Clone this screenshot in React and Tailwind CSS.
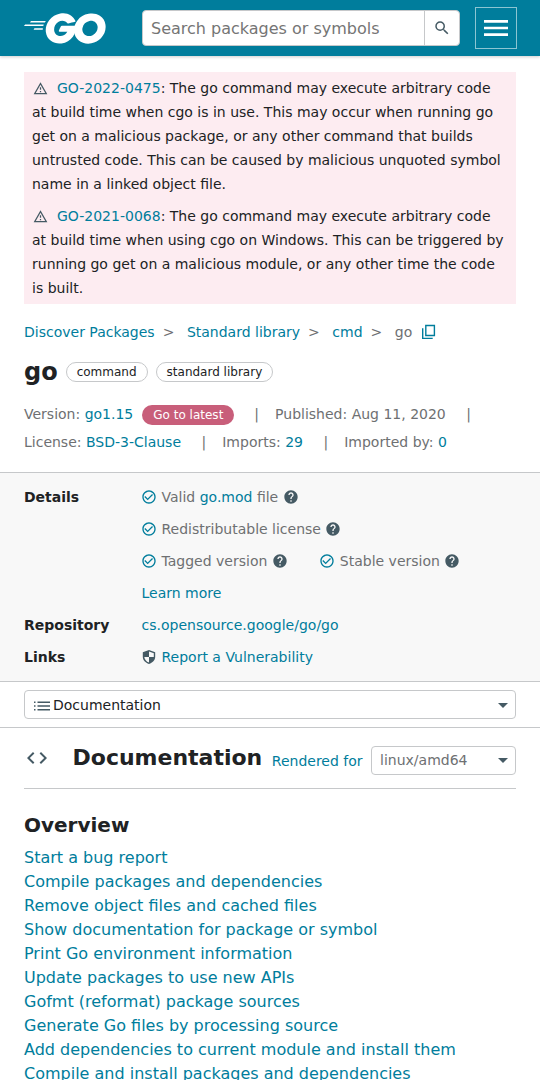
import React from "react";
import {
  MdSearch,
  MdMenu,
  MdOutlineWarningAmber,
  MdCheckCircleOutline,
  MdHelp,
  MdCode,
  MdArrowDropDown,
} from "react-icons/md";

const alerts = [
  {
    id: "GO-2022-0475",
    lines: [
      ": The go command may execute arbitrary code",
      "at build time when cgo is in use. This may occur when running go",
      "get on a malicious package, or any other command that builds",
      "untrusted code. This can be caused by malicious unquoted symbol",
      "name in a linked object file.",
    ],
  },
  {
    id: "GO-2021-0068",
    lines: [
      ": The go command may execute arbitrary code",
      "at build time when using cgo on Windows. This can be triggered by",
      "running go get on a malicious module, or any other time the code",
      "is built.",
    ],
  },
];

const overview = [
  "Start a bug report",
  "Compile packages and dependencies",
  "Remove object files and cached files",
  "Show documentation for package or symbol",
  "Print Go environment information",
  "Update packages to use new APIs",
  "Gofmt (reformat) package sources",
  "Generate Go files by processing source",
  "Add dependencies to current module and install them",
  "Compile and install packages and dependencies",
];

function Link({ children, className = "" }) {
  return (
    <a href="#" className={`text-[#007d9c] ${className}`}>
      {children}
    </a>
  );
}

function GoLogo() {
  return (
    <svg viewBox="24.5 78 206.5 77" className="h-[31px] w-[82px]" fill="#fff" aria-label="Go">
      <path d="M40.2,101.1c-0.4,0-0.5-0.2-0.3-0.5l2.1-2.7c0.2-0.3,0.7-0.5,1.1-0.5l35.7,0c0.4,0,0.5,0.3,0.3,0.6l-1.7,2.6c-0.2,0.3-0.7,0.6-1,0.6L40.2,101.1z" />
      <path d="M25.1,110.3c-0.4,0-0.5-0.2-0.3-0.5l2.1-2.7c0.2-0.3,0.7-0.5,1.1-0.5l45.6,0c0.4,0,0.6,0.3,0.5,0.6l-0.8,2.4c-0.1,0.4-0.5,0.6-0.9,0.6L25.1,110.3z" />
      <path d="M49.3,119.5c-0.4,0-0.5-0.3-0.3-0.6l1.4-2.5c0.2-0.3,0.6-0.6,1-0.6l20,0c0.4,0,0.6,0.3,0.6,0.7l-0.2,2.4c0,0.4-0.4,0.7-0.7,0.7L49.3,119.5z" />
      <path d="M153.1,99.3c-6.3,1.6-10.6,2.8-16.8,4.4c-1.5,0.4-1.6,0.5-2.9-1c-1.5-1.7-2.6-2.8-4.7-3.8c-6.3-3.1-12.4-2.2-18.1,1.5c-6.8,4.4-10.3,10.9-10.2,19c0.1,8,5.6,14.6,13.5,15.7c6.8,0.9,12.5-1.5,17-6.6c0.9-1.1,1.7-2.3,2.7-3.7c-3.6,0-8.1,0-19.3,0c-2.1,0-2.6-1.3-1.9-3c1.3-3.1,3.7-8.3,5.1-10.9c0.3-0.6,1-1.6,2.5-1.6c5.1,0,23.9,0,36.4,0c-0.2,2.7-0.2,5.4-0.6,8.1c-1.1,7.2-3.8,13.8-8.2,19.6c-7.2,9.5-16.6,15.4-28.5,17c-9.8,1.3-18.9-0.6-26.9-6.6c-7.4-5.6-11.6-13-12.7-22.2c-1.3-10.9,1.9-20.7,8.5-29.3c7.1-9.3,16.5-15.2,28-17.3c9.4-1.7,18.4-0.6,26.5,4.9c5.3,3.5,9.1,8.3,11.6,14.1C154.7,98.5,154.3,99,153.1,99.3z" />
      <path d="M186.2,154.6c-9.1-0.2-17.4-2.8-24.4-8.8c-5.9-5.1-9.6-11.6-10.8-19.3c-1.8-11.3,1.3-21.3,8.1-30.2c7.3-9.6,16.1-14.6,28-16.7c10.2-1.8,19.8-0.8,28.5,5.1c7.9,5.4,12.8,12.7,14.1,22.3c1.7,13.5-2.2,24.5-11.5,33.9c-6.6,6.7-14.7,10.9-24,12.8C191.5,154.2,188.8,154.3,186.2,154.6z M210,114.2c-0.1-1.3-0.1-2.3-0.3-3.3c-1.8-9.9-10.9-15.5-20.4-13.3c-9.3,2.1-15.3,8-17.5,17.4c-1.8,7.8,2,15.7,9.2,18.9c5.5,2.4,11,2.1,16.3-0.6C205.2,129.2,209.5,122.8,210,114.2z" />
    </svg>
  );
}

function CopyIcon() {
  return (
    <svg viewBox="0 0 16 16" className="ml-[9px] size-4 text-[#007d9c]" fill="none" stroke="currentColor" strokeWidth="1.4">
      <path d="M4.8 1.500h8.600v10H4.800z" />
      <path d="M1.700 4.200v10.200h10" />
    </svg>
  );
}

function ShieldIcon() {
  return (
    <svg viewBox="0 0 16 16" className="-ml-[0.5px] mr-[4.5px] size-4 text-[#455a64]" fill="currentColor" fillRule="evenodd">
      <path d="M8 .9L14.2 3.2v4.6c0 3.4-2.6 6-6.2 7.3C4.4 13.800 1.8 11.200 1.8 7.800V3.200zM8 2.500V8h4.800V4.200zM8 8H3.300C3.600 10.600 5.300 12.500 8 13.600z" />
    </svg>
  );
}

function ListIcon() {
  return (
    <svg viewBox="0 0 16 10" className="ml-[2px] mr-[3px] mt-[2px] h-[10px] w-4 text-[#455a64]" fill="currentColor">
      <path d="M0 .4h1.500v1.500H0zM0 4.250h1.500v1.500H0zM0 8.100h1.500v1.500H0zM3.500 .4H16v1.500H3.500zM3.500 4.250H16v1.500H3.500zM3.500 8.100H16v1.500H3.500z" />
    </svg>
  );
}

function Check({ children }) {
  return (
    <div className="flex items-center whitespace-pre">
      <MdCheckCircleOutline className="-ml-[0.5px] mr-[4.5px] size-4 text-[#007d9c]" />
      <span>{children}</span>
      <MdHelp className="ml-[4.5px] size-4 text-[#455a64]" />
    </div>
  );
}

function Header() {
  return (
    <header className="flex h-14 items-center bg-[#007d9c] pl-6 shadow-[0_1px_3px_rgba(0,0,0,0.2)]">
      <GoLogo />
      <div className="ml-9 flex h-9 w-[318px] overflow-hidden rounded-[4px] border border-[#c6c8ca] bg-white">
        <div className="flex flex-1 items-center border-r border-[#c6c8ca] pl-2 pt-[2px] text-base text-[#757575]">
          Search packages or symbols
        </div>
        <div className="flex w-[34px] items-center justify-center">
          <MdSearch className="size-[18px] text-[#455a64]" />
        </div>
      </div>
      <div className="ml-[15px] flex h-[42px] w-[42px] items-center justify-center border border-[#8cc5d2]">
        <MdMenu className="size-8 shrink-0 text-white" />
      </div>
    </header>
  );
}

export default function App() {
  return (
    <div className="h-[1080px] w-[540px] overflow-hidden bg-white font-['DejaVu_Sans',sans-serif] text-sm leading-6 text-[#202224]">
      <Header />
      <section className="mx-6 mt-4 flex flex-col gap-2 bg-[#fdecf1] px-2 py-1">
        {alerts.map((a) => (
          <div key={a.id} className="whitespace-nowrap">
            <div className="flex items-center">
              <MdOutlineWarningAmber className="ml-[0.5px] mr-[9.5px] size-[15px] text-[#455a64]" />
              <Link>{a.id}</Link>
              {a.lines[0]}
            </div>
            {a.lines.slice(1).map((l) => (
              <div key={l}>{l}</div>
            ))}
          </div>
        ))}
      </section>

      <nav className="ml-6 mt-4 flex h-6 items-center text-[#6e7072]">
        <Link>Discover Packages</Link>
        <span className="ml-2 mr-[12.5px]">&gt;</span>
        <Link>Standard library</Link>
        <span className="ml-2 mr-[12.5px]">&gt;</span>
        <Link>cmd</Link>
        <span className="ml-2 mr-[12.5px]">&gt;</span>
        <span>go</span>
        <CopyIcon />
      </nav>

      <div className="ml-6 mt-3 flex h-8 items-center">
        <h1 className="text-2xl font-bold leading-8">go</h1>
        <span className="ml-2 h-5 rounded-full border border-[#c6c8ca] px-[10px] text-xs leading-[18px]">command</span>
        <span className="ml-2 h-5 rounded-full border border-[#c6c8ca] px-[10px] text-xs leading-[18px]">standard library</span>
      </div>

      <div className="ml-6 mt-3 text-[#6e7072]">
        <div className="flex h-7 items-center whitespace-pre">
          <span>Version: </span>
          <Link>go1.15</Link>
          <span className="ml-[9px] mt-[2px] h-5 rounded-full bg-[#c85e7a] px-[11px] text-xs leading-5 text-white">Go to latest</span>
          <span className="ml-5">|</span>
          <span className="ml-4">Published: Aug 11, 2020</span>
          <span className="ml-[20.5px]">|</span>
        </div>
        <div className="flex h-7 items-center whitespace-pre">
          <span>License: </span>
          <Link>BSD-3-Clause</Link>
          <span className="ml-[20.5px]">|</span>
          <span className="ml-4">Imports: </span>
          <Link>29</Link>
          <span className="ml-[20.5px]">|</span>
          <span className="ml-4">Imported by: </span>
          <Link>0</Link>
        </div>
      </div>

      <section className="mt-4 grid h-[210px] grid-cols-[117.5px_1fr] content-start border-y border-[#c6c8ca] bg-[#f8f8f8] pl-6 pt-2 leading-8 text-[#6e7072]">
        <h2 className="font-bold text-[#202224]">Details</h2>
        <div>
          <Check>Valid <Link>go.mod</Link> file</Check>
          <Check>Redistributable license</Check>
          <div className="flex gap-8">
            <Check>Tagged version</Check>
            <Check>Stable version</Check>
          </div>
          <Link className="block">Learn more</Link>
        </div>
        <h2 className="font-bold text-[#202224]">Repository</h2>
        <Link>cs.opensource.google/go/go</Link>
        <h2 className="font-bold text-[#202224]">Links</h2>
        <div className="flex items-center">
          <ShieldIcon />
          <Link>Report a Vulnerability</Link>
        </div>
      </section>

      <div className="flex h-[46px] items-center border-b border-[#c6c8ca] px-6">
        <div className="flex h-[29px] flex-1 items-center rounded-[4px] border border-[#c6c8ca] pl-[7px]">
          <ListIcon />
          <span className="flex-1">Documentation</span>
          <MdArrowDropDown className="size-6 text-[#455a64]" />
        </div>
      </div>

      <div className="mx-6 flex h-[61px] items-center border-b border-[#c6c8ca]">
        <MdCode className="ml-[0.5px] size-6 text-[#455a64]" />
        <h2 className="ml-6 text-[22px] font-bold">Documentation</h2>
        <Link className="ml-[9.5px] pt-[6px]">Rendered for</Link>
        <div className="ml-2 mt-1 flex h-[29px] flex-1 items-center rounded-[4px] border border-[#c6c8ca] pl-[8.5px] text-[#6e7072]">
          <span className="flex-1">linux/amd64</span>
          <MdArrowDropDown className="size-6 text-[#455a64]" />
        </div>
      </div>

      <h3 className="ml-6 mt-6 text-xl font-bold leading-6">Overview</h3>
      <ul className="ml-6 mt-[9px] text-base leading-6">
        {overview.map((item) => (
          <li key={item}>
            <Link>{item}</Link>
          </li>
        ))}
      </ul>
    </div>
  );
}
